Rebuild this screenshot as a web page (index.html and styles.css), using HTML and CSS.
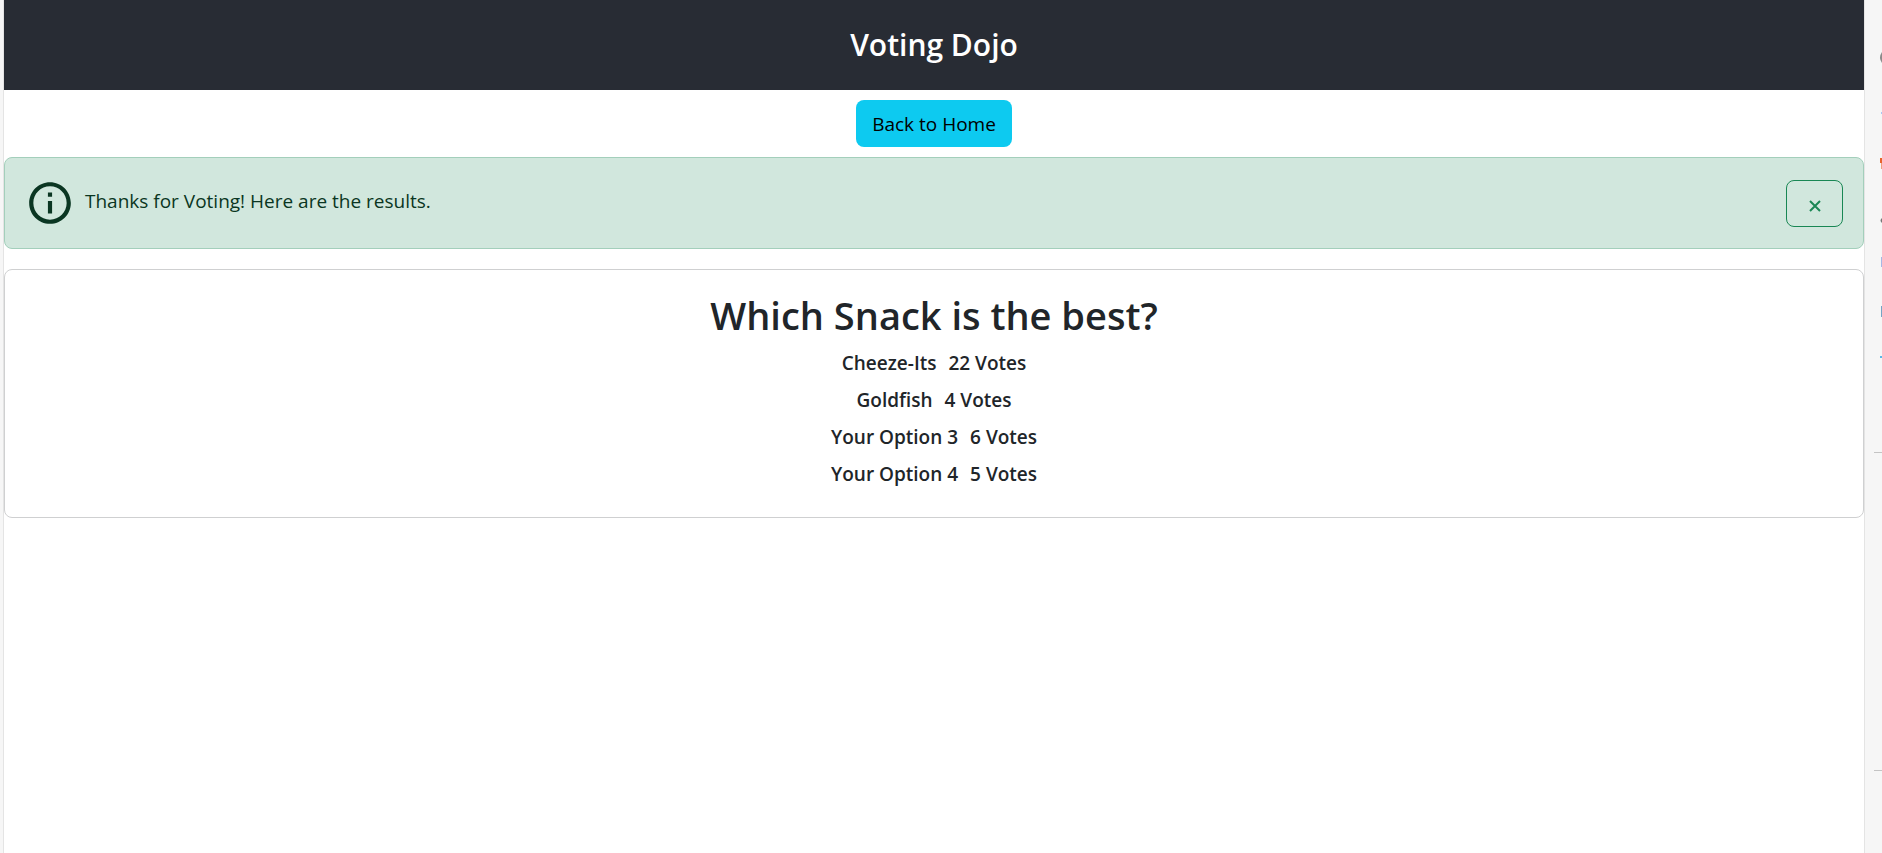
FILE: index.html
```html
<!DOCTYPE html>
<html lang="en">
<head>
<meta charset="utf-8">
<title>Voting Dojo</title>
<link rel="stylesheet" href="styles.css">
</head>
<body>
<div class="page">
  <header class="header"><h1 class="brand">Voting Dojo</h1></header>
  <main class="content">
    <a class="home-button" href="#">Back to Home</a>
    <div class="alert" role="alert">
      <svg class="info-icon" viewBox="0 0 24 24" aria-hidden="true"><path d="M11 7h2v2h-2zm0 4h2v6h-2zm1-9C6.48 2 2 6.48 2 12s4.48 10 10 10 10-4.480 10-10S17.520 2 12 2zm0 18c-4.410 0-8-3.590-8-8s3.590-8 8-8 8 3.590 8 8-3.590 8-8 8z"/></svg>
      <p class="message">Thanks for Voting! Here are the results.</p>
      <button class="close" type="button" aria-label="Close"><svg class="close-icon" viewBox="0 0 12 12"><path d="M1 1l10 10M11 1L1 11"/></svg></button>
    </div>
    <section class="card">
      <h2 class="question">Which Snack is the best?</h2>
      <ul class="results">
        <li class="result"><span>Cheeze-Its</span><span>22 Votes</span></li>
        <li class="result"><span>Goldfish</span><span>4 Votes</span></li>
        <li class="result"><span>Your Option 3</span><span>6 Votes</span></li>
        <li class="result"><span>Your Option 4</span><span>5 Votes</span></li>
      </ul>
    </section>
  </main>
</div>
<aside class="rail">
  <svg class="rail-icons" viewBox="0 0 18 853" aria-hidden="true">
    <path fill="#8b8b8b" d="M18 52q-4 5.500 0 11z"/>
    <path fill="#a8c7f5" d="M17 112h1v2h-1z"/>
    <path fill="#e8642c" d="M16 158h2v5h-2z"/>
    <path fill="#f0a080" d="M17 163h1v6h-1z"/>
    <path fill="#777" d="M18 218q-3 2.500 0 5z"/>
    <path fill="#a5b8e5" d="M17 257h1v10h-1z"/>
    <path fill="#75a5c5" d="M17 306h1v11h-1z"/>
    <path fill="#5bb8e8" d="M16 356h2v2h-2z"/>
    <path fill="#c4c4c4" d="M10 452h8v1h-8zM10 770h8v1h-8z"/>
  </svg>
</aside>
</body>
</html>
```
FILE: styles.css
```css
* { box-sizing: border-box; }
body {
  margin: 0;
  min-height: 100vh;
  display: flex;
  background: #f6f6f6;
  color: #212529;
  font: 400 19px/30px "Open Sans", "Noto Sans", sans-serif;
}
h1, h2, p, ul { margin: 0; padding: 0; }
.page {
  flex: 1;
  margin-left: 3px;
  background: #fff;
  border-left: 1px solid #e4e4e4;
}
.header {
  display: flex;
  justify-content: center;
  padding: 27px 0;
  background: #282c34;
}
.brand { color: #fff; font-size: 30px; line-height: 36px; font-weight: 600; }
.content { display: flex; flex-direction: column; padding-top: 10px; }
.home-button {
  align-self: center;
  padding: 9px 16px 8px;
  border-radius: 8px;
  background: #0dcaf0;
  color: #000;
  text-decoration: none;
}
.alert {
  display: flex;
  align-items: center;
  margin: 10px 0 20px;
  padding: 20px;
  border: 1px solid #a3cfbb;
  border-radius: 8px;
  background: #d1e7dd;
  color: #0a3622;
}
.info-icon { width: 50px; height: 50px; fill: currentColor; }
.message { flex: 1; padding: 0 10px 4px; }
.close {
  display: grid;
  place-items: center;
  width: 57px;
  height: 47px;
  padding: 6px 0 0;
  border: 1px solid #198754;
  border-radius: 8px;
  background: transparent;
  color: #198754;
}
.close-icon { width: 12px; height: 12px; fill: none; stroke: currentColor; stroke-width: 2; }
.card {
  padding: 21px 20px 18px;
  border: 1px solid #cfd0d1;
  border-radius: 8px;
  text-align: center;
}
.question { font-size: 38px; line-height: 48px; font-weight: 600; }
.results { margin-top: 12px; list-style: none; font-weight: 600; line-height: 24px; }
.result { display: flex; justify-content: center; gap: 12px; padding-bottom: 13px; }
.rail { width: 18px; border-left: 1px solid #e4e4e4; }
.rail-icons { display: block; width: 18px; height: 853px; margin-left: -1px; }
```
